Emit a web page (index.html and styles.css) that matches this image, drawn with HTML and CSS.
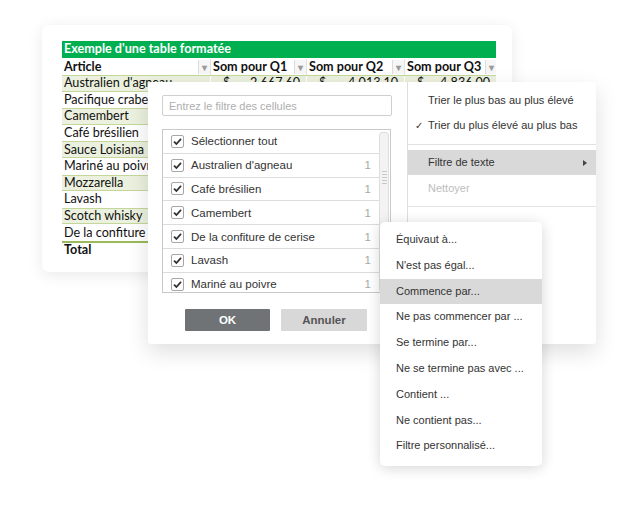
FILE: index.html
```html
<!DOCTYPE html>
<html lang="fr">
<head>
    <meta charset="UTF-8">
    <title>Filtre de texte</title>
    <link rel="stylesheet" href="styles.css">
</head>
<body>
    <div class="stage">
        <!-- Feuille de calcul en arrière-plan -->
        <div class="sheet">
            <div class="sheet-title">Exemple d'une table formatée</div>
            <div class="row head">
                <div class="cell">Article<span class="dd">&#9662;</span></div>
                <div class="cell">Som pour Q1<span class="dd">&#9662;</span></div>
                <div class="cell">Som pour Q2<span class="dd">&#9662;</span></div>
                <div class="cell">Som pour Q3<span class="dd">&#9662;</span></div>
            </div>
            <div class="row band">
                <div class="cell">Australien d'agneau</div>
                <div class="cell num"><span>$</span><span>2 667,60</span></div>
                <div class="cell num"><span>$</span><span>4 013,10</span></div>
                <div class="cell num"><span>$</span><span>4 836,00</span></div>
            </div>
            <div class="row"><div class="cell">Pacifique crabes</div><div class="cell"></div><div class="cell"></div><div class="cell"></div></div>
            <div class="row band"><div class="cell">Camembert</div><div class="cell"></div><div class="cell"></div><div class="cell"></div></div>
            <div class="row"><div class="cell">Café brésilien</div><div class="cell"></div><div class="cell"></div><div class="cell"></div></div>
            <div class="row band"><div class="cell">Sauce Loisiana</div><div class="cell"></div><div class="cell"></div><div class="cell"></div></div>
            <div class="row"><div class="cell">Mariné au poivre</div><div class="cell"></div><div class="cell"></div><div class="cell"></div></div>
            <div class="row band"><div class="cell">Mozzarella</div><div class="cell"></div><div class="cell"></div><div class="cell"></div></div>
            <div class="row"><div class="cell">Lavash</div><div class="cell"></div><div class="cell"></div><div class="cell"></div></div>
            <div class="row band"><div class="cell">Scotch whisky</div><div class="cell"></div><div class="cell"></div><div class="cell"></div></div>
            <div class="row"><div class="cell">De la confiture de cerise</div><div class="cell"></div><div class="cell"></div><div class="cell"></div></div>
            <div class="row total"><div class="cell">Total</div><div class="cell"></div><div class="cell"></div><div class="cell"></div></div>
        </div>

        <!-- Panneau de filtre + menu de tri -->
        <div class="popup">
            <div class="filter">
                <input class="search" type="text" placeholder="Entrez le filtre des cellules">
                <div class="list">
                    <div class="items">
                        <div class="item"><span class="box"><svg width="11" height="11" viewBox="0 0 11 11"><path d="M2 5.6 L4.4 8 L9 2.8" fill="none" stroke="#333" stroke-width="1.8"/></svg></span>Sélectionner tout</div>
                        <div class="item"><span class="box"><svg width="11" height="11" viewBox="0 0 11 11"><path d="M2 5.6 L4.4 8 L9 2.8" fill="none" stroke="#333" stroke-width="1.8"/></svg></span>Australien d'agneau<span class="count">1</span></div>
                        <div class="item"><span class="box"><svg width="11" height="11" viewBox="0 0 11 11"><path d="M2 5.6 L4.4 8 L9 2.8" fill="none" stroke="#333" stroke-width="1.8"/></svg></span>Café brésilien<span class="count">1</span></div>
                        <div class="item"><span class="box"><svg width="11" height="11" viewBox="0 0 11 11"><path d="M2 5.6 L4.4 8 L9 2.8" fill="none" stroke="#333" stroke-width="1.8"/></svg></span>Camembert<span class="count">1</span></div>
                        <div class="item"><span class="box"><svg width="11" height="11" viewBox="0 0 11 11"><path d="M2 5.6 L4.4 8 L9 2.8" fill="none" stroke="#333" stroke-width="1.8"/></svg></span>De la confiture de cerise<span class="count">1</span></div>
                        <div class="item"><span class="box"><svg width="11" height="11" viewBox="0 0 11 11"><path d="M2 5.6 L4.4 8 L9 2.8" fill="none" stroke="#333" stroke-width="1.8"/></svg></span>Lavash<span class="count">1</span></div>
                        <div class="item"><span class="box"><svg width="11" height="11" viewBox="0 0 11 11"><path d="M2 5.6 L4.4 8 L9 2.8" fill="none" stroke="#333" stroke-width="1.8"/></svg></span>Mariné au poivre<span class="count">1</span></div>
                    </div>
                    <div class="scroll"><span class="grip"></span></div>
                </div>
                <div class="buttons">
                    <button class="btn ok">OK</button>
                    <button class="btn cancel">Annuler</button>
                </div>
            </div>
            <div class="menu">
                <div class="menu-item">Trier le plus bas au plus élevé</div>
                <div class="menu-item"><span class="tick">&#10003;</span>Trier du plus élevé au plus bas</div>
                <div class="sep"></div>
                <div class="menu-item active">Filtre de texte<span class="arrow"></span></div>
                <div class="menu-item disabled">Nettoyer</div>
                <div class="sep"></div>
            </div>
        </div>

        <!-- Sous-menu du filtre de texte -->
        <div class="submenu">
            <div class="sub-item">Équivaut à...</div>
            <div class="sub-item">N'est pas égal...</div>
            <div class="sub-item active">Commence par...</div>
            <div class="sub-item">Ne pas commencer par ...</div>
            <div class="sub-item">Se termine par...</div>
            <div class="sub-item">Ne se termine pas avec ...</div>
            <div class="sub-item">Contient ...</div>
            <div class="sub-item">Ne contient pas...</div>
            <div class="sub-item">Filtre personnalisé...</div>
        </div>
    </div>
</body>
</html>
```

FILE: styles.css
```css
* {
    box-sizing: border-box;
}
body {
    margin: 0;
    background: #fff;
    font-family: "Liberation Sans", Arial, sans-serif;
    color: #333;
}
.stage {
    position: relative;
    width: 640px;
    height: 520px;
    overflow: hidden;
}

/* feuille */
.sheet {
    position: absolute;
    left: 42px;
    top: 25px;
    width: 470px;
    height: 247px;
    padding: 16px 16px 0 20px;
    background: #fff;
    border-radius: 7px;
    box-shadow: 0 3px 16px rgba(0, 0, 0, 0.09);
    font-family: Lato, "Open Sans", sans-serif;
    font-size: 12.6px;
    color: #111;
}
.sheet-title {
    width: 434px;
    height: 17px;
    line-height: 16px;
    padding-left: 2px;
    background: #00b050;
    color: #fff;
    font-weight: bold;
}
.row {
    display: grid;
    grid-template-columns: 148px 96px 98px 92px;
    width: 434px;
    height: 16.6px;
    line-height: 16px;
}
.cell {
    display: flex;
    align-items: center;
    padding-left: 2px;
    white-space: nowrap;
    overflow: hidden;
}
.cell + .cell {
    border-left: 1px solid #e3e3e3;
}
.head {
    font-weight: bold;
    height: 17px;
    padding-top: 1px;
}
.head .cell {
    justify-content: space-between;
    padding-right: 0;
}
.dd {
    width: 12px;
    height: 14px;
    line-height: 14px;
    margin-left: 4px;
    text-align: center;
    font-size: 10px;
    color: #9a9a9a;
    background: #f6f6f6;
    border-left: 1px solid #dcdcdc;
}
.band {
    background: #ebf1de;
    border-top: 1px solid #c4d79b;
    border-bottom: 1px solid #c4d79b;
}
.band .cell + .cell {
    border-left-color: #fff;
}
.num {
    justify-content: space-between;
    padding: 0 6px 0 12px;
}
.total {
    font-weight: bold;
    border-top: 2px solid #9bbb59;
}
.total .cell + .cell {
    border-left: none;
}

/* panneau de filtre */
.popup {
    position: absolute;
    left: 148px;
    top: 82px;
    width: 448px;
    height: 262px;
    display: flex;
    background: #fff;
    border-radius: 3px;
    box-shadow: 0 8px 22px rgba(0, 0, 0, 0.13);
}
.filter {
    width: 259px;
    padding: 13px 0 0 14px;
    display: flex;
    flex-direction: column;
}
.search {
    width: 230px;
    height: 21px;
    padding: 0 6px;
    border: 1px solid #cfcfcf;
    border-radius: 2px;
    font-family: "Liberation Sans", Arial, sans-serif;
    font-size: 11px;
    color: #333;
}
.search::placeholder {
    color: #aeaeae;
}
.list {
    display: flex;
    width: 229px;
    height: 164px;
    margin-top: 13px;
    border: 1px solid #c9c9c9;
    overflow: hidden;
}
.items {
    flex: 1;
}
.item {
    display: flex;
    align-items: center;
    height: 23.8px;
    padding: 0 8px 0 8px;
    border-bottom: 1px solid #dcdcdc;
    font-size: 11.5px;
    color: #333;
}
.box {
    display: flex;
    align-items: center;
    justify-content: center;
    width: 13px;
    height: 13px;
    margin-right: 7px;
    border: 1px solid #a6a6a6;
    border-radius: 2px;
    background: #fff;
}
.count {
    margin-left: auto;
    color: #a8a8a8;
}
.scroll {
    display: flex;
    align-items: flex-start;
    justify-content: center;
    width: 10px;
    margin: 2px 1px 0 0;
    background: #f3f3f3;
    border: 1px solid #dedede;
    border-radius: 3px;
}
.grip {
    width: 5px;
    height: 14px;
    margin-top: 38px;
    background: repeating-linear-gradient(#c8c8c8 0 1px, transparent 1px 3px);
}
.buttons {
    display: flex;
    gap: 11px;
    margin: 16px 0 0 23px;
}
.btn {
    width: 85px;
    height: 22px;
    border: none;
    border-radius: 1px;
    font-family: "Liberation Sans", Arial, sans-serif;
    font-size: 11.5px;
    font-weight: bold;
}
.ok {
    background: #6f7376;
    color: #fff;
}
.cancel {
    width: 86px;
    background: #d8d8d8;
    color: #555;
}

/* menu de tri */
.menu {
    flex: 1;
    padding-top: 6px;
    border-left: 1px solid #dedede;
    font-size: 11px;
    color: #333;
}
.menu-item {
    position: relative;
    height: 25px;
    line-height: 25px;
    padding-left: 20px;
}
.tick {
    position: absolute;
    left: 7px;
    font-size: 10px;
}
.menu-item.active {
    background: #d9d9d9;
}
.menu-item.disabled {
    color: #bdbdbd;
    line-height: 27px;
}
.arrow {
    position: absolute;
    right: 9px;
    top: 10px;
    border-left: 4px solid #444;
    border-top: 3px solid transparent;
    border-bottom: 3px solid transparent;
}
.sep {
    height: 1px;
    margin: 6px 0 5px;
    background: #e2e2e2;
}

/* sous-menu */
.submenu {
    position: absolute;
    left: 380px;
    top: 222px;
    width: 162px;
    height: 244px;
    padding-top: 5px;
    background: #fff;
    border-radius: 5px;
    box-shadow: 0 2px 14px rgba(0, 0, 0, 0.17);
    font-size: 11px;
    color: #333;
}
.sub-item {
    height: 25.8px;
    line-height: 25.8px;
    padding-left: 16px;
    white-space: nowrap;
}
.sub-item.active {
    background: #d9d9d9;
}
```
